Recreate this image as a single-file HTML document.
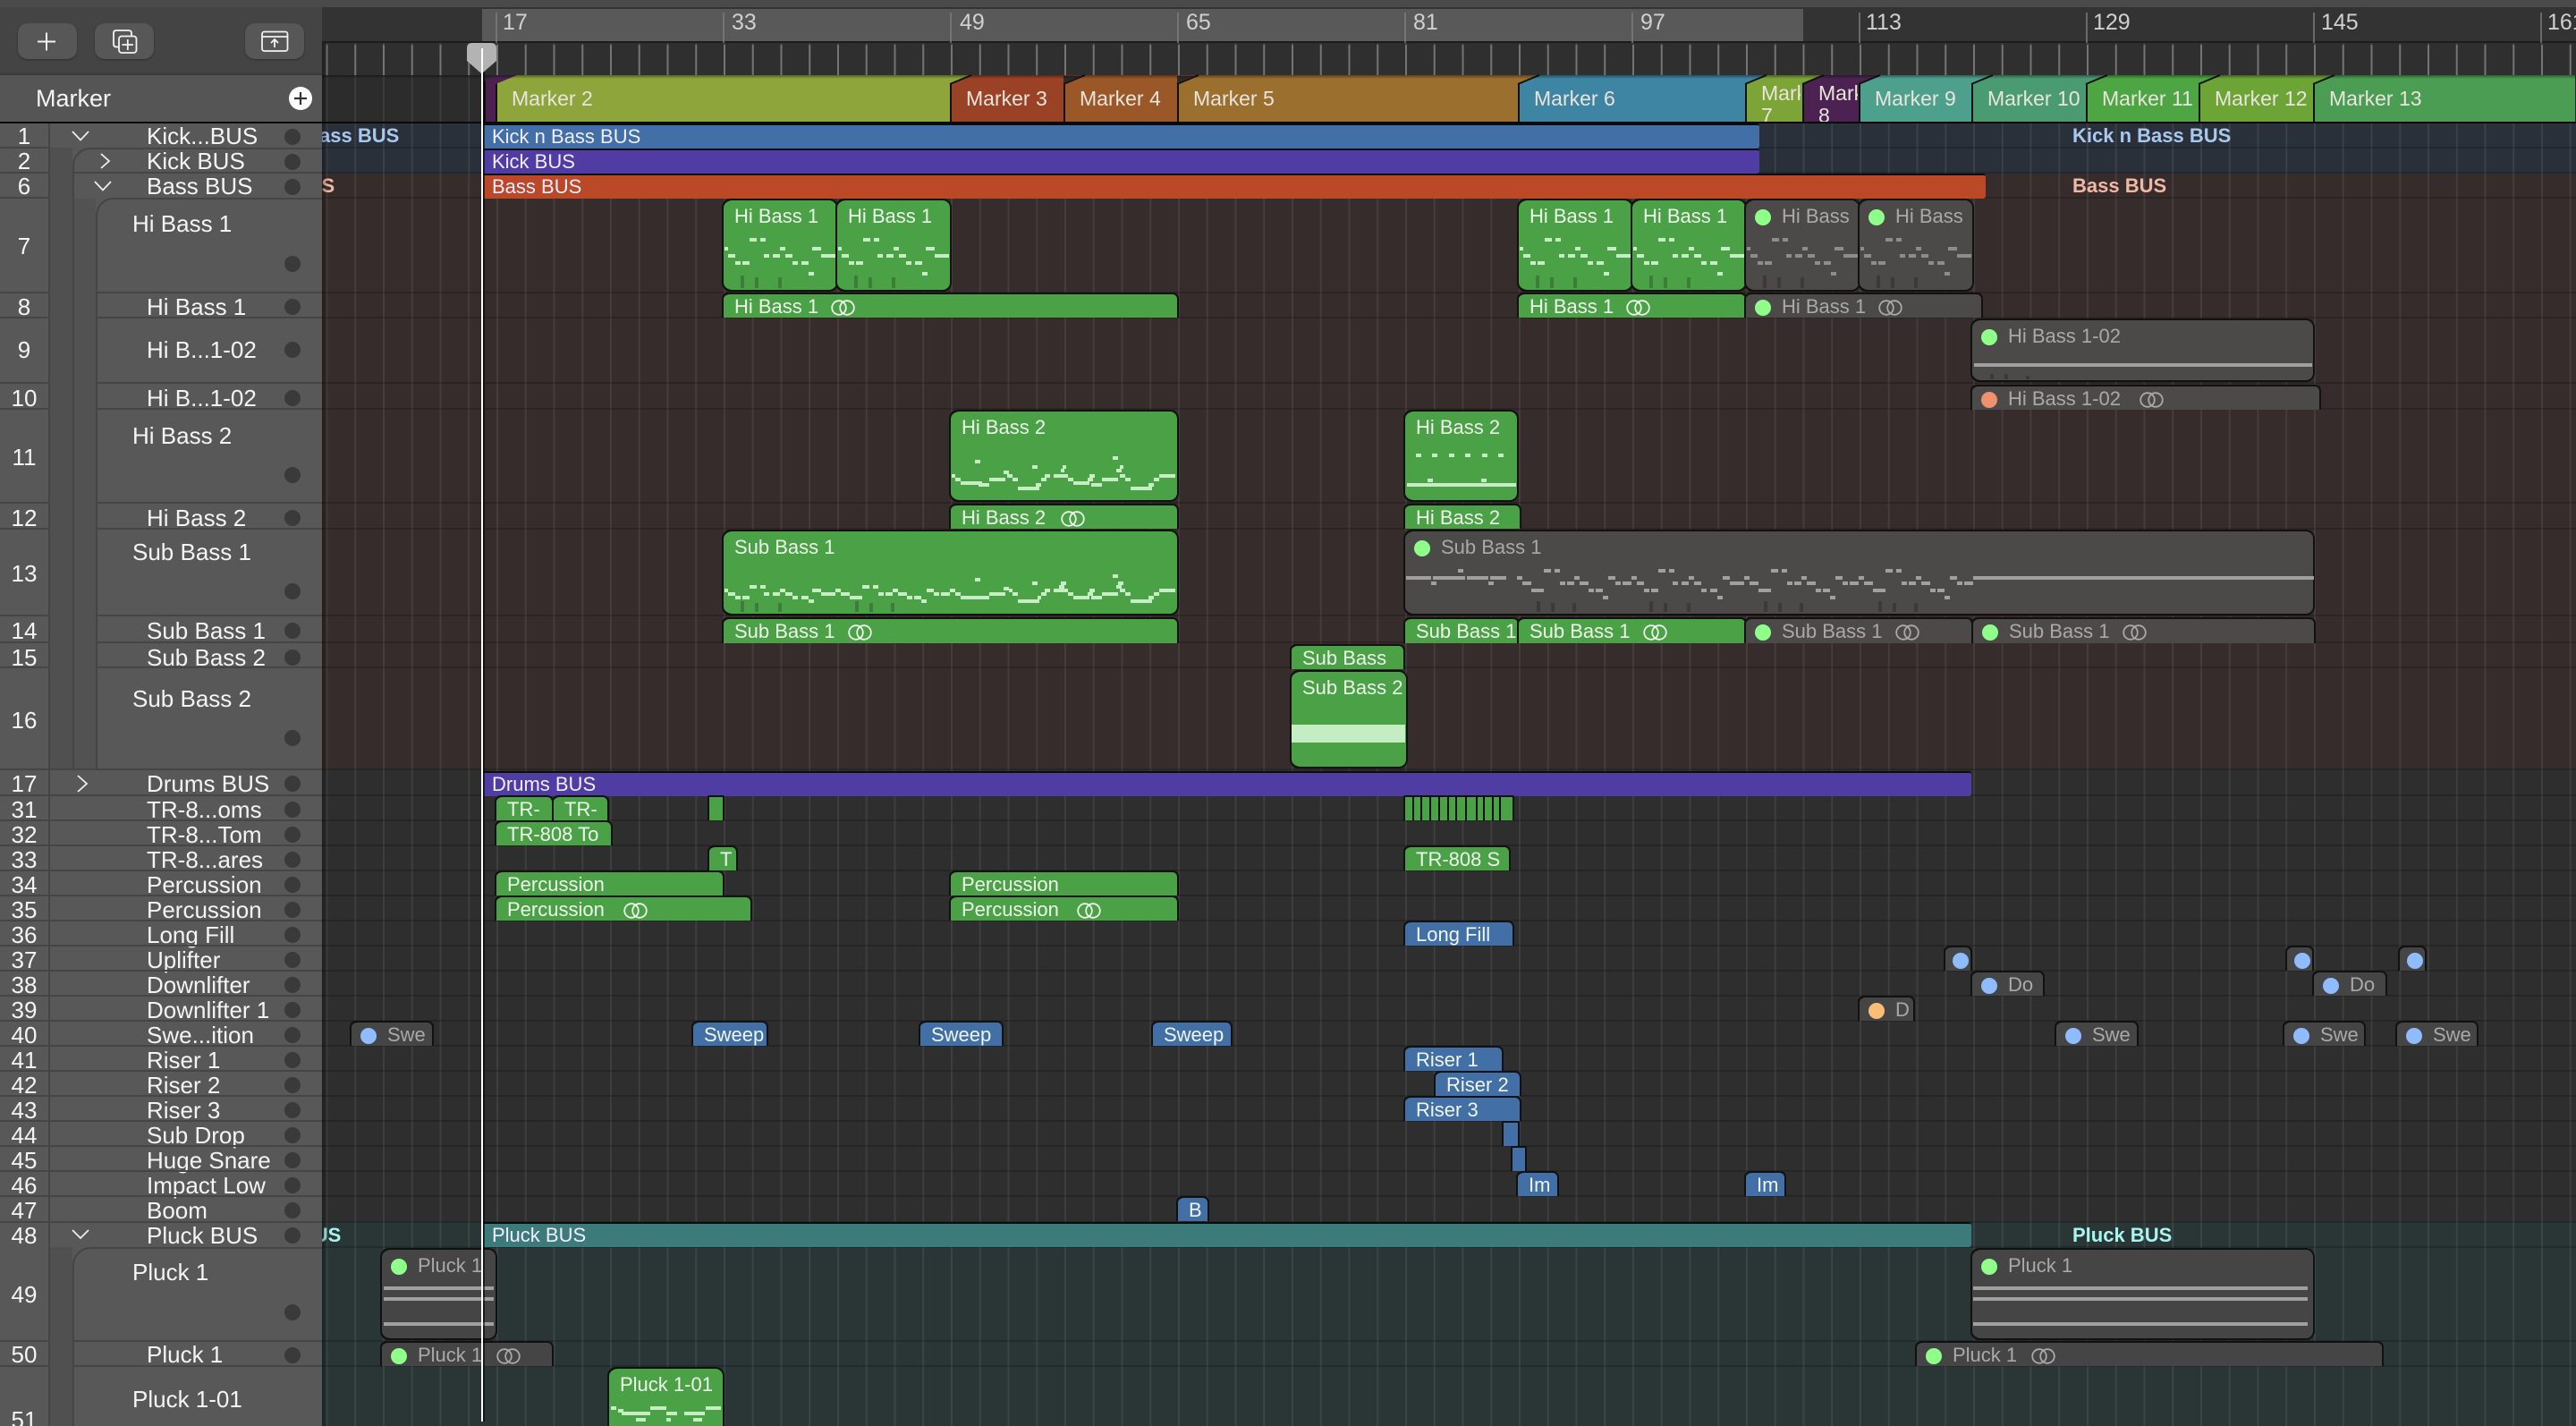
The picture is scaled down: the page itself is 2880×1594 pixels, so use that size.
<!DOCTYPE html>
<html><head><meta charset="utf-8"><title>Arrange</title>
<style>
html,body{margin:0;padding:0;background:#2e2e2e}
#a{position:relative;width:2880px;height:1594px;overflow:hidden;font-family:"Liberation Sans",sans-serif;color:#fff}
#a div,#a svg,#a span.p{position:absolute}
.bg{left:360px;width:2520px}
.mk{top:84px;height:52px;margin-left:-1px;clip-path:polygon(0 10px,24px 0,100% 0,100% 100%,0 100%);border-left:2px solid #111;box-sizing:border-box;font-size:23px;line-height:52px;padding-left:16px;color:#e9e4dc;white-space:nowrap;overflow:hidden}
.mk2{line-height:25px}
.n{left:0;width:54px;text-align:center;font-size:26px;line-height:28px;height:28px;color:#f4f4f4}
.l{left:164px;font-size:26px;line-height:28px;height:28px;white-space:nowrap;color:#f4f4f4}
.l2{left:148px}
.o{left:318px;width:18px;height:18px;border-radius:50%;background:#3a3a3a}
.bus{left:541px;height:26px;border-top:2px solid #0c0c0c;border-radius:0 3px 3px 0;font-size:22px;line-height:26px;padding-left:9px;box-sizing:content-box;white-space:nowrap;color:#eef}
.bl{font-size:22px;font-weight:bold;line-height:28px;white-space:nowrap}
.r{box-sizing:border-box;height:28px;border:2px solid #111;border-left:0;border-bottom:0;box-shadow:-2px 0 0 #111;border-radius:7px 7px 0 0;font-size:22px;line-height:27px;padding-left:12px;white-space:nowrap;overflow:hidden;color:#eef6ec}
.t{border-bottom:2px solid #111;border-radius:10px;line-height:36px}
.g{background:#4ba146}
.b{background:#426fa5}
.m{background:#4c4949;color:#aaa9a8;padding-left:10px}
.k{background:#454545}
i.d{display:inline-block;width:18px;height:18px;border-radius:50%;margin-right:12px;vertical-align:-3px}
.dg{background:#8fff8a}.db{background:#8ebcff}.dy{background:#fbbd77}.dr{background:#f0916d}
svg.lp{position:static!important;width:27px;height:18px;margin-left:14px;vertical-align:-3px;fill:none;stroke:currentColor;stroke-width:1.8}
.btn{top:26px;width:66px;height:40px;border-radius:11px;background:#575757;box-shadow:0 1px 2px rgba(0,0,0,.35)}
.rul{top:8px;font-size:25px;line-height:34px;color:#d0d0d0}
</style></head><body>
<div id="a">
<!-- top / ruler -->
<div style="left:0;top:0;width:2880px;height:8px;background:#4a4a4a"></div>
<div style="left:360px;top:8px;width:2520px;height:38px;background:#333"></div>
<div style="left:539px;top:10px;width:1477px;height:36px;background:#595959"></div>
<div style="left:360px;top:46px;width:2520px;height:2px;background:#1c1c1c"></div>
<div style="left:360px;top:48px;width:2520px;height:36px;background:#2f2f2f"></div>
<div style="left:360px;top:84px;width:2520px;height:52px;background:#2c2c2c"></div>
<!-- row backgrounds -->
<div class="bg" style="top:138px;height:56px;background:#2a303a"></div>
<div class="bg" style="top:194px;height:666px;background:#352c2b"></div>
<div class="bg" style="top:860px;height:506px;background:#2e2e2e"></div>
<div class="bg" style="top:1366px;height:228px;background:#2a3536"></div>
<!-- grid -->
<div class="bg" style="top:48px;height:1546px;background-image:linear-gradient(90deg,rgba(255,255,255,.08) 0,rgba(255,255,255,.08) 2px,transparent 2px);background-size:31.75px 100%;background-position:4.5px 0"></div>
<div class="bg" style="top:50px;height:34px;background-image:linear-gradient(90deg,rgba(255,255,255,.28) 0,rgba(255,255,255,.28) 2px,transparent 2px);background-size:31.75px 100%;background-position:4.5px 0"></div>
<svg style="left:0;top:0" width="2880" height="1594"><path fill="none" stroke="rgba(0,0,0,.18)" stroke-width="2" d="M360 165H2880M360 193H2880M360 221H2880M360 327H2880M360 355H2880M360 428H2880M360 457H2880M360 562H2880M360 591H2880M360 688H2880M360 718H2880M360 746H2880M360 860H2880M360 889H2880M360 917H2880M360 945H2880M360 973H2880M360 1001H2880M360 1029H2880M360 1057H2880M360 1085H2880M360 1113H2880M360 1141H2880M360 1169H2880M360 1197H2880M360 1225H2880M360 1253H2880M360 1281H2880M360 1309H2880M360 1337H2880M360 1366H2880M360 1394H2880M360 1499H2880M360 1527H2880"/>
<path fill="none" stroke="#7d7d7d" stroke-width="1.5" d="M555 14V48M809 14V48M1063 14V48M1317 14V48M1571 14V48M1825 14V48M2079 14V48M2333 14V48M2587 14V48M2841 14V48"/></svg>
<div class="rul" style="left:562px">17</div><div class="rul" style="left:818px">33</div><div class="rul" style="left:1073px">49</div><div class="rul" style="left:1326px">65</div><div class="rul" style="left:1580px">81</div><div class="rul" style="left:1834px">97</div><div class="rul" style="left:2086px">113</div><div class="rul" style="left:2340px">129</div><div class="rul" style="left:2595px">145</div><div class="rul" style="left:2848px">161</div>
<!-- markers -->
<div class="mk" style="left:542px;width:37px;background:#4c2150;clip-path:polygon(0 8px,10px 0,100% 0,100% 100%,0 100%)"></div>
<div class="mk" style="left:555px;width:532px;background:#8ea53b">Marker 2</div>
<div class="mk" style="left:1063px;width:151px;background:#994225">Marker 3</div>
<div class="mk" style="left:1190px;width:151px;background:#9a5728">Marker 4</div>
<div class="mk" style="left:1317px;width:405px;background:#9b6f2d">Marker 5</div>
<div class="mk" style="left:1698px;width:278px;background:#3d85a3">Marker 6</div>
<div class="mk mk2" style="left:1952px;width:88px;background:#7ca437"><span class="p" style="left:16px;top:8px;width:44px;height:44px;overflow:hidden;white-space:pre">Marker
7</span></div>
<div class="mk mk2" style="left:2016px;width:87px;background:#4b2252"><span class="p" style="left:16px;top:8px;width:44px;height:44px;overflow:hidden;white-space:pre">Marker
8</span></div>
<div class="mk" style="left:2079px;width:150px;background:#4da18c">Marker 9</div>
<div class="mk" style="left:2205px;width:152px;background:#4b9b72">Marker 10</div>
<div class="mk" style="left:2333px;width:150px;background:#4da544">Marker 11</div>
<div class="mk" style="left:2459px;width:152px;background:#6da436">Marker 12</div>
<div class="mk" style="left:2587px;width:293px;background:#4a9d52">Marker 13</div>
<svg style="left:0;top:0" width="2880" height="140"><path fill="none" stroke="#111" stroke-width="2" d="M1062 94L1086 84M1189 94L1213 84M1316 94L1340 84M1697 94L1721 84M1951 94L1975 84M2015 94L2039 84M2078 94L2102 84M2204 94L2228 84M2332 94L2356 84M2458 94L2482 84M2586 94L2610 84"/><path fill="#2b2b2b" d="M1189 93V85H1210ZM1316 93V85H1337Z"/></svg>
<div style="left:360px;top:84px;width:2520px;height:4px;background:linear-gradient(rgba(0,0,0,.4),transparent)"></div>
<div style="left:360px;top:136px;width:2520px;height:2px;background:#0a0a0a"></div>

<!-- bus repeated labels -->
<div class="bl" style="left:269px;top:138px;color:#a9c8f0">Kick n Bass BUS</div>
<div class="bl" style="left:2317px;top:138px;color:#a9c8f0">Kick n Bass BUS</div>
<div class="bl" style="left:269px;top:194px;color:#f2b8a5">Bass BUS</div>
<div class="bl" style="left:2317px;top:194px;color:#f2b8a5">Bass BUS</div>
<div class="bl" style="left:270px;top:1367px;color:#a7f5ee">Pluck BUS</div>
<div class="bl" style="left:2317px;top:1367px;color:#a7f5ee">Pluck BUS</div>

<!-- bus bars -->
<div class="bus" style="top:138px;width:1417px;background:#426fa5">Kick n Bass BUS</div>
<div class="bus" style="top:166px;width:1417px;background:#503da4">Kick BUS</div>
<div class="bus" style="top:194px;width:1670px;background:#bb4826">Bass BUS</div>
<div class="bus" style="top:862px;width:1654px;background:#503da4">Drums BUS</div>
<div class="bus" style="top:1366px;width:1654px;background:#3d7a7a">Pluck BUS</div>

<!-- row 7 -->
<div class="r t g" style="left:809px;top:222px;width:128px;height:104px">Hi Bass 1</div>
<div class="r t g" style="left:936px;top:222px;width:128px;height:104px">Hi Bass 1</div>
<div class="r t g" style="left:1698px;top:222px;width:128px;height:104px">Hi Bass 1</div>
<div class="r t g" style="left:1825px;top:222px;width:128px;height:104px">Hi Bass 1</div>
<div class="r t m" style="left:1952px;top:222px;width:128px;height:104px"><i class="d dg"></i>Hi Bass</div>
<div class="r t m" style="left:2079px;top:222px;width:128px;height:104px"><i class="d dg"></i>Hi Bass</div>
<!-- row 8 -->
<div class="r g" style="left:809px;top:327px;width:509px">Hi Bass 1<svg class="lp" viewBox="0 0 27 18"><circle cx="9" cy="9" r="7.8"/><circle cx="18" cy="9" r="7.8"/></svg></div>
<div class="r g" style="left:1698px;top:327px;width:255px">Hi Bass 1<svg class="lp" viewBox="0 0 27 18"><circle cx="9" cy="9" r="7.8"/><circle cx="18" cy="9" r="7.8"/></svg></div>
<div class="r m" style="left:1952px;top:327px;width:265px"><i class="d dg"></i>Hi Bass 1<svg class="lp" viewBox="0 0 27 18"><circle cx="9" cy="9" r="7.8"/><circle cx="18" cy="9" r="7.8"/></svg></div>
<!-- row 9/10 -->
<div class="r t m" style="left:2205px;top:356px;width:383px;height:71px"><i class="d dg"></i>Hi Bass 1-02</div>
<div class="r m" style="left:2205px;top:430px;width:390px"><i class="d dr"></i>Hi Bass 1-02<svg class="lp" style="margin-left:21px" viewBox="0 0 27 18"><circle cx="9" cy="9" r="7.8"/><circle cx="18" cy="9" r="7.8"/></svg></div>
<!-- row 11/12 -->
<div class="r t g" style="left:1063px;top:458px;width:255px;height:103px">Hi Bass 2</div>
<div class="r t g" style="left:1571px;top:458px;width:127px;height:103px">Hi Bass 2</div>
<div class="r g" style="left:1063px;top:563px;width:255px">Hi Bass 2<svg class="lp" style="margin-left:17px" viewBox="0 0 27 18"><circle cx="9" cy="9" r="7.8"/><circle cx="18" cy="9" r="7.8"/></svg></div>
<div class="r g" style="left:1571px;top:563px;width:130px">Hi Bass 2</div>
<!-- row 13/14 -->
<div class="r t g" style="left:809px;top:592px;width:509px;height:96px">Sub Bass 1</div>
<div class="r t m" style="left:1571px;top:592px;width:1017px;height:96px"><i class="d dg"></i>Sub Bass 1</div>
<div class="r g" style="left:809px;top:690px;width:509px;height:29px">Sub Bass 1<svg class="lp" viewBox="0 0 27 18"><circle cx="9" cy="9" r="7.8"/><circle cx="18" cy="9" r="7.8"/></svg></div>
<div class="r g" style="left:1571px;top:690px;width:128px;height:29px">Sub Bass 1</div>
<div class="r g" style="left:1698px;top:690px;width:255px;height:29px">Sub Bass 1<svg class="lp" viewBox="0 0 27 18"><circle cx="9" cy="9" r="7.8"/><circle cx="18" cy="9" r="7.8"/></svg></div>
<div class="r m" style="left:1952px;top:690px;width:254px;height:29px"><i class="d dg"></i>Sub Bass 1<svg class="lp" viewBox="0 0 27 18"><circle cx="9" cy="9" r="7.8"/><circle cx="18" cy="9" r="7.8"/></svg></div>
<div class="r m" style="left:2206px;top:690px;width:383px;height:29px"><i class="d dg"></i>Sub Bass 1<svg class="lp" viewBox="0 0 27 18"><circle cx="9" cy="9" r="7.8"/><circle cx="18" cy="9" r="7.8"/></svg></div>
<!-- row 15/16 -->
<div class="r g" style="left:1444px;top:720px;width:127px">Sub Bass</div>
<div class="r t g" style="left:1444px;top:749px;width:130px;height:110px">Sub Bass 2</div>
<div style="left:1444px;top:810px;width:127px;height:20px;background:#c4edc4"></div>
<!-- drums -->
<div class="r g" style="left:555px;top:889px;width:64px">TR-</div>
<div class="r g" style="left:619px;top:889px;width:62px">TR-</div>
<div class="r g" style="left:793px;top:889px;width:17px;padding:0;border-radius:2px 2px 0 0"></div>
<div class="r g" style="left:1571px;top:889px;width:122px;padding:0;border-radius:2px 2px 0 0"></div>
<div class="r g" style="left:555px;top:917px;width:130px">TR-808 To</div>
<div class="r g" style="left:793px;top:945px;width:32px">T</div>
<div class="r g" style="left:1571px;top:945px;width:118px">TR-808 S</div>
<div class="r g" style="left:555px;top:973px;width:255px">Percussion</div>
<div class="r g" style="left:1063px;top:973px;width:255px">Percussion</div>
<div class="r g" style="left:555px;top:1001px;width:286px">Percussion<svg class="lp" style="margin-left:21px" viewBox="0 0 27 18"><circle cx="9" cy="9" r="7.8"/><circle cx="18" cy="9" r="7.8"/></svg></div>
<div class="r g" style="left:1063px;top:1001px;width:255px">Percussion<svg class="lp" style="margin-left:20px" viewBox="0 0 27 18"><circle cx="9" cy="9" r="7.8"/><circle cx="18" cy="9" r="7.8"/></svg></div>
<div class="r b" style="left:1571px;top:1029px;width:122px">Long Fill</div>
<!-- fx -->
<div class="r m k" style="left:2175px;top:1057px;width:30px;padding-left:8px"><i class="d db"></i></div>
<div class="r m k" style="left:2557px;top:1057px;width:30px;padding-left:8px"><i class="d db"></i></div>
<div class="r m k" style="left:2683px;top:1057px;width:30px;padding-left:8px"><i class="d db"></i></div>
<div class="r m k" style="left:2205px;top:1085px;width:81px"><i class="d db"></i>Do</div>
<div class="r m k" style="left:2587px;top:1085px;width:82px"><i class="d db"></i>Do</div>
<div class="r m k" style="left:2079px;top:1113px;width:62px"><i class="d dy"></i>D</div>
<div class="r m k" style="left:393px;top:1141px;width:92px"><i class="d db"></i>Swe</div>
<div class="r b" style="left:775px;top:1141px;width:84px">Sweep</div>
<div class="r b" style="left:1029px;top:1141px;width:93px">Sweep</div>
<div class="r b" style="left:1289px;top:1141px;width:89px">Sweep</div>
<div class="r m k" style="left:2299px;top:1141px;width:92px"><i class="d db"></i>Swe</div>
<div class="r m k" style="left:2554px;top:1141px;width:91px"><i class="d db"></i>Swe</div>
<div class="r m k" style="left:2680px;top:1141px;width:91px"><i class="d db"></i>Swe</div>
<div class="r b" style="left:1571px;top:1169px;width:110px">Riser 1</div>
<div class="r b" style="left:1605px;top:1197px;width:96px">Riser 2</div>
<div class="r b" style="left:1571px;top:1225px;width:130px">Riser 3</div>
<div class="r b" style="left:1681px;top:1253px;width:18px;padding:0;border-radius:2px 2px 0 0"></div>
<div class="r b" style="left:1691px;top:1281px;width:16px;padding:0;border-radius:2px 2px 0 0"></div>
<div class="r b" style="left:1697px;top:1309px;width:46px">Im</div>
<div class="r b" style="left:1952px;top:1309px;width:45px">Im</div>
<div class="r b" style="left:1317px;top:1337px;width:35px">B</div>
<!-- pluck -->
<div class="r t m k" style="left:427px;top:1395px;width:129px;height:103px"><i class="d dg"></i>Pluck 1</div>
<div class="r t m k" style="left:2205px;top:1395px;width:383px;height:103px"><i class="d dg"></i>Pluck 1</div>
<div class="r m k" style="left:427px;top:1499px;width:192px"><i class="d dg"></i>Pluck 1<svg class="lp" style="margin-left:16px" viewBox="0 0 27 18"><circle cx="9" cy="9" r="7.8"/><circle cx="18" cy="9" r="7.8"/></svg></div>
<div class="r m k" style="left:2143px;top:1499px;width:522px"><i class="d dg"></i>Pluck 1<svg class="lp" style="margin-left:16px" viewBox="0 0 27 18"><circle cx="9" cy="9" r="7.8"/><circle cx="18" cy="9" r="7.8"/></svg></div>
<div class="r t g" style="left:681px;top:1528px;width:129px;height:80px">Pluck 1-01</div>

<!-- notes -->
<svg style="left:0;top:0" width="2880" height="1594" fill="none">
<defs>
<path id="hn" d="M29 44h8M41 44h6M1 54h4M63 54h6M99 54h10M5 62h8M45 62h6M55 62h8M69 62h8M109 62h16M13 70h6M21 70h8M77 70h6M87 70h8M95 82h6"/>
<path id="ht" d="M21 84V98M37 86V98M63 86V98"/>
</defs>
<g stroke="#c6edc4" stroke-width="4">
<use href="#hn" x="809" y="224"/><use href="#hn" x="936" y="224"/><use href="#hn" x="1698" y="224"/><use href="#hn" x="1825" y="224"/>
</g>
<g stroke="#3c7d3a" stroke-width="4">
<use href="#ht" x="809" y="224"/><use href="#ht" x="936" y="224"/><use href="#ht" x="1698" y="224"/><use href="#ht" x="1825" y="224"/>
</g>
<g stroke="#8d8d8d" stroke-width="4">
<use href="#hn" x="1952" y="224"/><use href="#hn" x="2079" y="224"/>
</g>
<g stroke="#3a3a3a" stroke-width="4">
<use href="#ht" x="1952" y="224"/><use href="#ht" x="2079" y="224"/>
<path d="M2227 418v6M2243 418v6M2267 420v4"/>
</g>
<!-- Hi Bass 2 -->
<g transform="translate(1060 500) scale(.33333)" stroke="#c6edc4" stroke-width="12">
<path d="M90 48h18M552 36h18M282 66h18M384 66h12M378 78h12M576 66h12M564 78h18M186 84h18M12 96h12M198 96h18M324 96h18M354 96h48M474 96h18M576 96h18M708 96h54M24 108h18M138 108h54M216 108h18M312 108h18M402 108h18M468 108h18M516 108h54M594 108h18M690 108h18M42 120h72M294 126h18M420 120h54M102 126h36M480 126h36M234 138h72M612 138h72M672 126h18"/>
</g>
<path stroke="#c6edc4" stroke-width="4" d="M1583 509h6M1601 509h6M1620 509h6M1638 509h6M1657 509h6M1675 509h6M1573 542h122M1596 537h6M1656 537h6"/>
<!-- Sub Bass 1 green -->
<g transform="translate(805 625) scale(.33333)" stroke-width="12">
<path stroke="#c6edc4" d="M99 93h24M135 93h18M477 93h24M513 93h18M855 69h18M1317 57h18M1047 81h18M1143 81h18M1335 81h18M1137 93h18M1329 93h18M951 99h18M15 105h12M201 105h18M309 105h30M387 105h18M579 105h18M693 105h24M771 105h18M969 105h12M1089 105h18M1119 105h48M1239 105h18M1341 105h18M1473 105h54M27 117h24M147 117h18M177 117h24M219 117h24M339 117h48M405 117h30M531 117h18M555 117h24M597 117h30M717 117h18M741 117h30M789 117h18M903 117h54M981 117h18M1077 117h18M1167 117h18M1233 117h18M1281 117h54M1359 117h18M1455 117h18M51 129h18M75 129h24M243 129h18M273 129h24M435 129h42M627 129h18M651 129h24M807 129h96M1065 129h12M1185 129h54M1245 129h36M1437 129h18M297 141h18M675 141h18M999 141h72M1377 141h72"/>
<path stroke="#3c7d3a" d="M75 141v36M123 147v30M201 147v30M459 141v36M507 147v30M579 147v30"/>
</g>
<!-- Sub Bass 1 grey -->
<g transform="translate(1565 625) scale(.33333)" stroke-width="12">
<path stroke="#a0a0a0" d="M195 39h18M483 39h24M519 39h18M867 39h24M903 39h18M1245 39h24M1281 39h18M1629 39h24M1665 39h18M21 63h84M111 63h108M225 63h72M303 63h54M393 63h18M585 63h18M699 63h24M777 63h18M969 63h18M1083 63h24M1155 63h18M1347 63h18M1461 63h24M1539 63h18M1731 63h18M1845 63h24M1923 63H3066M105 81h18M297 81h18M411 81h30M537 81h18M561 81h24M603 81h30M723 81h18M747 81h30M795 81h24M915 81h18M945 81h24M987 81h24M1107 81h48M1173 81h30M1299 81h18M1323 81h24M1365 81h30M1485 81h18M1509 81h30M1557 81h30M1683 81h18M1707 81h24M1749 81h30M1869 81h18M1893 81h30M441 105h42M633 105h18M657 105h24M819 105h18M843 105h24M1011 105h18M1041 105h24M1203 105h42M1395 105h18M1419 105h24M1587 105h42M1779 105h18M1803 105h24M681 129h18M1065 129h18M1443 129h18M1827 129h18"/>
<path stroke="#3a3a3a" d="M465 141v36M513 147v30M585 147v30M843 141v36M891 147v30M969 147v30M1227 141v36M1275 147v30M1347 147v30M1611 141v36M1659 147v30M1731 147v30"/>
</g>
<!-- long grey lines -->
<path stroke="#a0a0a0" stroke-width="4" d="M2207 408H2585M429 1440H552M429 1452H552M429 1480H552M2206 1440H2580M2206 1452H2580M2206 1480H2580"/>
<!-- drum strip -->
<path stroke="#111" stroke-width="2" d="M1580 891v26M1589 891v26M1599 891v26M1609 891v26M1619 891v26M1628 891v26M1639 891v26M1651 891v26M1659 891v26M1669 891v26M1677 891v26"/>
<!-- pluck 1-01 -->
<path stroke="#c6edc4" stroke-width="4" d="M683 1574h6M691 1577h6M695 1580h22M727 1574h18M717 1580h10M745 1580h12M765 1580h23M789 1574h17M711 1587h11M745 1587h5M775 1587h10"/>
</svg>

<!-- left panel -->
<div style="left:360px;top:48px;width:7px;height:1546px;background:linear-gradient(90deg,rgba(0,0,0,.35),transparent)"></div>
<div style="left:0;top:8px;width:360px;height:76px;background:#444"></div>
<div style="left:0;top:80px;width:360px;height:5px;background:linear-gradient(rgba(0,0,0,0),rgba(0,0,0,.22))"></div>
<div style="left:0;top:84px;width:360px;height:52px;background:#555"></div>
<div style="left:0;top:136px;width:360px;height:2px;background:#0a0a0a"></div>
<div style="left:0;top:138px;width:360px;height:1456px;background:#585858"></div>
<div style="left:54px;top:165px;width:27px;height:695px;background:#505050"></div>
<div style="left:54px;top:1394px;width:27px;height:200px;background:#505050"></div>
<div style="left:81px;top:165px;width:279px;height:695px;background:#585858;border-left:2px solid #454545;border-top:2px solid #454545;border-radius:20px 0 0 0;box-sizing:border-box"></div>
<div style="left:83px;top:222px;width:24px;height:638px;background:#525252"></div>
<div style="left:107px;top:221px;width:253px;height:639px;background:#585858;border-left:2px solid #454545;border-top:2px solid #454545;border-radius:20px 0 0 0;box-sizing:border-box"></div>
<div style="left:81px;top:1394px;width:279px;height:200px;background:#585858;border-left:2px solid #454545;border-top:2px solid #454545;border-radius:20px 0 0 0;box-sizing:border-box"></div>

<!-- buttons -->
<div class="btn" style="left:20px"></div><div class="btn" style="left:106px"></div><div class="btn" style="left:274px"></div>
<svg style="left:0;top:0" width="360" height="138" fill="none" stroke="#f2f2f2" stroke-width="1.8">
<path d="M42 46.5H62M52 36.5V56.5" stroke-width="2"/>
<path d="M133 52.5H130.5Q127 52.5 127 49V37Q127 34 130.5 34H143.5Q147 34 147 37V40"/>
<rect x="133" y="40.5" width="19.5" height="18.5" rx="3"/>
<path d="M136.5 50H149M142.8 44V56"/>
<rect x="293" y="35.5" width="28.5" height="21.5" rx="2.5"/>
<path d="M293 41H321.5M307 53V44.5M303 48L307 44L311 48"/>
<circle cx="336" cy="110" r="13" fill="#fff" stroke="none"/>
<path d="M329 110H343M336 103V117" stroke="#333" stroke-width="2.2"/>
</svg>
<div style="left:40px;top:92px;font-size:27px;line-height:36px;color:#f4f4f4">Marker</div>

<!-- row labels -->
<div class="n" style="top:138px">1</div><div class="l" style="top:138px">Kick...BUS</div><div class="o" style="top:144px"></div>
<div class="n" style="top:166px">2</div><div class="l" style="top:166px">Kick BUS</div><div class="o" style="top:172px"></div>
<div class="n" style="top:194px">6</div><div class="l" style="top:194px">Bass BUS</div><div class="o" style="top:200px"></div>
<div class="n" style="top:261px">7</div><div class="l l2" style="top:236px">Hi Bass 1</div><div class="o" style="top:286px"></div>
<div class="n" style="top:329px">8</div><div class="l" style="top:329px">Hi Bass 1</div><div class="o" style="top:334px"></div>
<div class="n" style="top:377px">9</div><div class="l" style="top:377px">Hi B...1-02</div><div class="o" style="top:382px"></div>
<div class="n" style="top:431px">10</div><div class="l" style="top:431px">Hi B...1-02</div><div class="o" style="top:436px"></div>
<div class="n" style="top:497px">11</div><div class="l l2" style="top:473px">Hi Bass 2</div><div class="o" style="top:522px"></div>
<div class="n" style="top:565px">12</div><div class="l" style="top:565px">Hi Bass 2</div><div class="o" style="top:570px"></div>
<div class="n" style="top:627px">13</div><div class="l l2" style="top:603px">Sub Bass 1</div><div class="o" style="top:652px"></div>
<div class="n" style="top:691px">14</div><div class="l" style="top:691px">Sub Bass 1</div><div class="o" style="top:696px"></div>
<div class="n" style="top:721px">15</div><div class="l" style="top:721px">Sub Bass 2</div><div class="o" style="top:726px"></div>
<div class="n" style="top:791px">16</div><div class="l l2" style="top:767px">Sub Bass 2</div><div class="o" style="top:816px"></div>
<div class="n" style="top:862px">17</div><div class="l" style="top:862px">Drums BUS</div><div class="o" style="top:867px"></div>
<div class="n" style="top:891px">31</div><div class="l" style="top:891px">TR-8...oms</div><div class="o" style="top:896px"></div>
<div class="n" style="top:919px">32</div><div class="l" style="top:919px">TR-8...Tom</div><div class="o" style="top:924px"></div>
<div class="n" style="top:947px">33</div><div class="l" style="top:947px">TR-8...ares</div><div class="o" style="top:952px"></div>
<div class="n" style="top:975px">34</div><div class="l" style="top:975px">Percussion</div><div class="o" style="top:980px"></div>
<div class="n" style="top:1003px">35</div><div class="l" style="top:1003px">Percussion</div><div class="o" style="top:1008px"></div>
<div class="n" style="top:1031px">36</div><div class="l" style="top:1031px">Long Fill</div><div class="o" style="top:1036px"></div>
<div class="n" style="top:1059px">37</div><div class="l" style="top:1059px">Uplifter</div><div class="o" style="top:1064px"></div>
<div class="n" style="top:1087px">38</div><div class="l" style="top:1087px">Downlifter</div><div class="o" style="top:1092px"></div>
<div class="n" style="top:1115px">39</div><div class="l" style="top:1115px">Downlifter 1</div><div class="o" style="top:1120px"></div>
<div class="n" style="top:1143px">40</div><div class="l" style="top:1143px">Swe...ition</div><div class="o" style="top:1148px"></div>
<div class="n" style="top:1171px">41</div><div class="l" style="top:1171px">Riser 1</div><div class="o" style="top:1176px"></div>
<div class="n" style="top:1199px">42</div><div class="l" style="top:1199px">Riser 2</div><div class="o" style="top:1204px"></div>
<div class="n" style="top:1227px">43</div><div class="l" style="top:1227px">Riser 3</div><div class="o" style="top:1232px"></div>
<div class="n" style="top:1255px">44</div><div class="l" style="top:1255px">Sub Drop</div><div class="o" style="top:1260px"></div>
<div class="n" style="top:1283px">45</div><div class="l" style="top:1283px">Huge Snare</div><div class="o" style="top:1288px"></div>
<div class="n" style="top:1311px">46</div><div class="l" style="top:1311px">Impact Low</div><div class="o" style="top:1316px"></div>
<div class="n" style="top:1339px">47</div><div class="l" style="top:1339px">Boom</div><div class="o" style="top:1344px"></div>
<div class="n" style="top:1367px">48</div><div class="l" style="top:1367px">Pluck BUS</div><div class="o" style="top:1372px"></div>
<div class="n" style="top:1433px">49</div><div class="l l2" style="top:1408px">Pluck 1</div><div class="o" style="top:1458px"></div>
<div class="n" style="top:1500px">50</div><div class="l" style="top:1500px">Pluck 1</div><div class="o" style="top:1506px"></div>
<div class="n" style="top:1573px">51</div><div class="l l2" style="top:1550px">Pluck 1-01</div>

<!-- panel lines + chevrons -->
<svg style="left:0;top:0" width="360" height="1594" fill="none">
<path stroke="#454545" stroke-width="2" d="M55 138V1594M0 165H54M0 193H54M0 221H54M0 327H54M0 355H54M0 428H54M0 457H54M0 562H54M0 591H54M0 688H54M0 718H54M0 746H54M0 860H54M81 193H360M107 327H360M107 355H360M107 428H360M107 457H360M107 562H360M107 591H360M107 688H360M107 718H360M107 746H360M0 860H360M0 889H360M0 917H360M0 945H360M0 973H360M0 1001H360M0 1029H360M0 1057H360M0 1085H360M0 1113H360M0 1141H360M0 1169H360M0 1197H360M0 1225H360M0 1253H360M0 1281H360M0 1309H360M0 1337H360M0 1366H360M0 1499H54M0 1527H54M81 1499H360M81 1527H360"/>
<path stroke="#ededed" stroke-width="1.8" d="M81 147L90 156.5L99 147M113 172L122 180L113 188M106 203L115 212.5L124 203M87 867L97 876L87 885M81 1375L90 1384L99 1375"/>
</svg>

<!-- playhead -->
<div style="left:540px;top:54px;width:2px;height:1535px;background:rgba(0,0,0,.6)"></div>
<div style="left:538px;top:54px;width:2px;height:1535px;background:#fff"></div>
<svg style="left:520px;top:46px" width="38" height="38"><path fill="#b3b3b3" d="M2 8Q2 2 8 2H29Q35 2 35 8V22L19 36L18 36L2 22Z"/><rect x="18" y="8" width="2" height="30" fill="#fff"/></svg>
</div>
</body></html>
